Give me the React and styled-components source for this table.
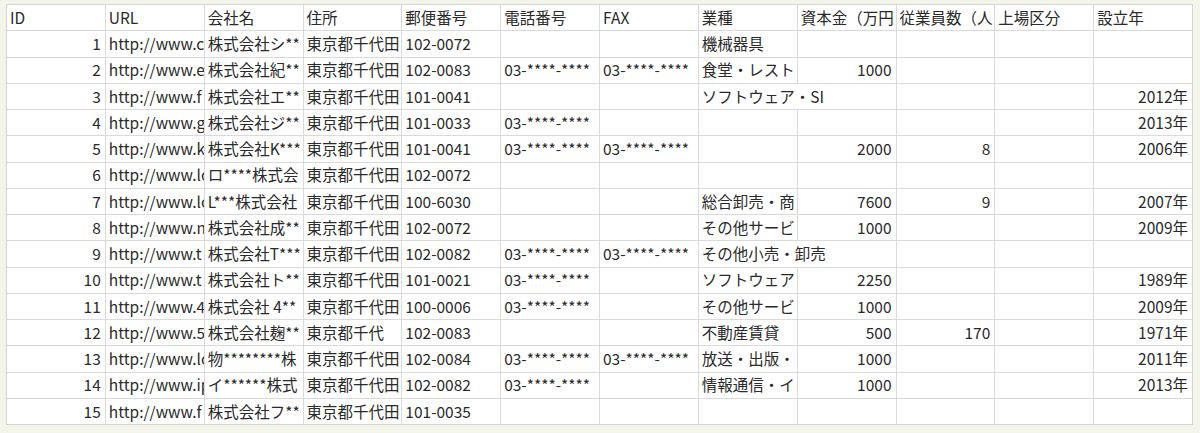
import React from 'react'
import styled, { createGlobalStyle } from 'styled-components'

const GlobalStyle = createGlobalStyle`
  html, body {
    margin: 0;
    padding: 0;
    background: #f3f4ea;
  }
`

const Page = styled.div`
  width: 1200px;
  height: 433px;
  padding: 4px 0 0 6px;
  box-sizing: border-box;
  background: #f3f4ea;
`

const Sheet = styled.div`
  display: grid;
  grid-template-columns: repeat(12, 1fr);
  grid-template-rows: repeat(16, 1fr);
  gap: 1px;
  width: 1187px;
  height: 421px;
  box-sizing: border-box;
  border: 1px solid #d4d4d0;
  background: #dadada;
  font-family: 'Noto Sans CJK JP', 'Noto Sans', sans-serif;
  font-size: 15.5px;
  color: #2a2a2a;
`

const Cell = styled.div`
  display: flex;
  align-items: center;
  justify-content: ${(p) => (p.$num ? 'flex-end' : 'flex-start')};
  grid-column: span ${(p) => p.$span || 1};
  padding: 0 ${(p) => (p.$num ? '4px' : '0')} 0 ${(p) => (p.$num ? '0' : '3px')};
  background: #fff;
  white-space: nowrap;
  overflow: hidden;
  line-height: 1;
`

const headers = ['ID', 'URL', '会社名', '住所', '郵便番号', '電話番号', 'FAX', '業種', '資本金（万円', '従業員数（人', '上場区分', '設立年']

const TEL = '03-****-****'
const CHIYODA = '東京都千代田'

// [url, name, address, zip, tel, fax, industry, capital, staff, listed, founded]
const rows = [
  ['http://www.c', '株式会社シ**', CHIYODA, '102-0072', '', '', '機械器具', '', '', '', ''],
  ['http://www.e', '株式会社紀**', CHIYODA, '102-0083', TEL, TEL, '食堂・レスト', '1000', '', '', ''],
  ['http://www.f', '株式会社エ**', CHIYODA, '101-0041', '', '', { text: 'ソフトウェア・SI', span: 2 }, '', '', '2012年'],
  ['http://www.g', '株式会社ジ**', CHIYODA, '101-0033', TEL, '', '', '', '', '', '2013年'],
  ['http://www.k', '株式会社K***', CHIYODA, '101-0041', TEL, TEL, '', '2000', '8', '', '2006年'],
  ['http://www.lo', 'ロ****株式会', CHIYODA, '102-0072', '', '', '', '', '', '', ''],
  ['http://www.lo', 'L***株式会社', CHIYODA, '100-6030', '', '', '総合卸売・商', '7600', '9', '', '2007年'],
  ['http://www.n', '株式会社成**', CHIYODA, '102-0072', '', '', 'その他サービ', '1000', '', '', '2009年'],
  ['http://www.t', '株式会社T***', CHIYODA, '102-0082', TEL, TEL, { text: 'その他小売・卸売', span: 2 }, '', '', ''],
  ['http://www.t', '株式会社ト**', CHIYODA, '101-0021', TEL, '', 'ソフトウェア', '2250', '', '', '1989年'],
  ['http://www.4', '株式会社 4**', CHIYODA, '100-0006', TEL, '', 'その他サービ', '1000', '', '', '2009年'],
  ['http://www.5', '株式会社麹**', '東京都千代', '102-0083', '', '', '不動産賃貸', '500', '170', '', '1971年'],
  ['http://www.lo', '物********株', CHIYODA, '102-0084', TEL, TEL, '放送・出版・', '1000', '', '', '2011年'],
  ['http://www.ip', 'イ******株式', CHIYODA, '102-0082', TEL, '', '情報通信・イ', '1000', '', '', '2013年'],
  ['http://www.f', '株式会社フ**', CHIYODA, '101-0035', '', '', '', '', '', '', ''],
]

// columns (after ID) that hold numbers: capital, staff, founded
const NUMERIC = [7, 8, 10]

function Row({ id, cells }) {
  let col = 0
  return (
    <>
      <Cell $num>{id}</Cell>
      {cells.map((v, j) => {
        const at = col
        if (typeof v === 'object') {
          col += v.span
          return (
            <Cell key={j} $span={v.span}>
              {v.text}
            </Cell>
          )
        }
        col += 1
        return (
          <Cell key={j} $num={NUMERIC.includes(at)}>
            {v}
          </Cell>
        )
      })}
    </>
  )
}

function App() {
  return (
    <>
      <GlobalStyle />
      <Page>
        <Sheet>
          {headers.map((h) => (
            <Cell key={h}>{h}</Cell>
          ))}
          {rows.map((row, i) => (
            <Row key={i} id={i + 1} cells={row} />
          ))}
        </Sheet>
      </Page>
    </>
  )
}

export default App
